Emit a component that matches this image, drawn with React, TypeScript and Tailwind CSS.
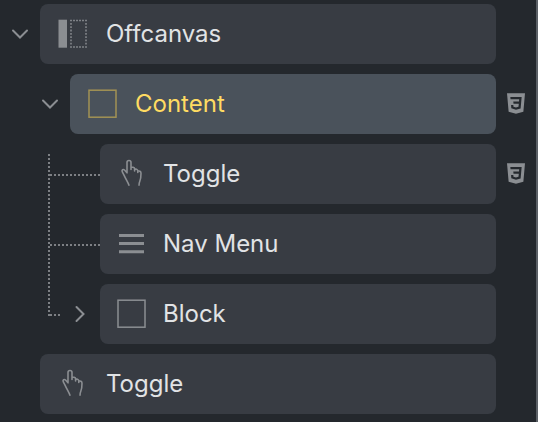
import { useState } from "react";

type IconName = "offcanvas" | "block" | "toggle" | "menu";

interface ElementIconProps {
  name: IconName;
}

const ElementIcon: React.FC<ElementIconProps> = ({ name }) => {
  return (
    <svg
      width="30"
      height="30"
      viewBox="0 0 30 30"
      fill="none"
      stroke="currentColor"
      className="shrink-0"
    >
      {name === "offcanvas" && (
        <>
          <rect x="0.5" y="0.7" width="8.5" height="28" fill="currentColor" stroke="none" />
          <g strokeWidth="1.7" opacity="0.85">
            <path d="M12 1.5H29M12 28H29" strokeDasharray="2 1" />
            <path d="M13 4V27M28 4V27" strokeDasharray="1.8 1.5" />
          </g>
        </>
      )}
      {name === "block" && (
        <rect x="1" y="1.2" width="27" height="27" strokeWidth="1.5" />
      )}
      {name === "toggle" && (
        <path
          d="M12.2 26.7C11 23.5 8.8 20 7.5 17.2L5.2 12.7C4.5 11 6.3 9.8 7.5 11L10 13.8V3.5C10 .9 14 .9 14 3.5V10.5V8.8C14.8 7.8 17.6 8 17.6 10V12V10.5C18.5 9.8 20.7 10.2 20.8 12V13.5V12.2C22.2 11.5 24 12.5 24 14.2C24 18 23.9 19.7 22.8 22.2C22 24 22 25 22 26.7"
          strokeWidth="1.6"
          strokeLinejoin="round"
        />
      )}
      {name === "menu" && (
        <path d="M2 6.5H27M2 14.5H27M2 22.8H27" strokeWidth="3" />
      )}
    </svg>
  );
};

const CssBadge: React.FC = () => (
  <svg
    width="18"
    height="21"
    viewBox="1.5 0 21 24"
    fill="currentColor"
    className="-mt-px"
  >
    <path d="M1.5 0h21l-1.91 21.563L11.977 24l-8.565-2.438L1.5 0zm17.09 4.413L5.41 4.41l.213 2.622 10.125.002-.255 2.716h-6.64l.24 2.573h6.182l-.366 3.523-2.91.804-2.956-.81-.188-2.11h-2.61l.29 3.855L12 19.288l5.373-1.53L18.59 4.414z" />
  </svg>
);

const indents = ["", "pl-[30px]", "pl-[60px]"];
const iconInsets = ["pl-[18px]", "pl-[18px]", "pl-[17px]"];
const labelGaps = ["ml-[18px]", "ml-[17px]", "ml-4"];

interface RowProps {
  label: string;
  icon: IconName;
  level?: number;
  open?: boolean;
  onToggle?: () => void;
  active?: boolean;
  hasCss?: boolean;
}

const Row: React.FC<RowProps> = ({
  label,
  icon,
  level = 0,
  open,
  onToggle,
  active,
  hasCss,
}) => {
  return (
    <div className={`flex h-[60px] items-center text-[#8b8e92] ${indents[level]}`}>
      <div className="flex w-10 shrink-0 justify-center">
        {onToggle && (
          <button onClick={onToggle} aria-label={label}>
            <svg
              width="20"
              height="20"
              viewBox="0 0 20 20"
              fill="none"
              stroke="currentColor"
              strokeWidth="2"
              strokeLinecap="round"
              className={open ? "" : "-rotate-90"}
            >
              <path d="M3 6.5L10 13.5L17 6.5" />
            </svg>
          </button>
        )}
      </div>
      <div
        className={`flex h-full flex-1 items-center rounded-lg ${iconInsets[level]} ${
          active ? "bg-[#4a525b] text-[#a39254]" : "bg-[#383c43]"
        }`}
      >
        <ElementIcon name={icon} />
        <span
          className={`text-2xl ${labelGaps[level]} ${
            active ? "text-[#ffdb62]" : "text-[#e1e3e5]"
          }`}
        >
          {label}
        </span>
      </div>
      <div className="flex w-10 shrink-0 justify-center">
        {hasCss && <CssBadge />}
      </div>
    </div>
  );
};

// dotted guides joining a parent to its children
const Guides: React.FC = () => (
  <svg
    width="52"
    height="162"
    viewBox="0 0 52 162"
    fill="none"
    stroke="#7d8084"
    strokeWidth="2"
    strokeDasharray="2 2"
    className="pointer-events-none absolute left-12 top-2.5"
  >
    <path d="M1 0V162M2 21H52M2 91H52M2 161H12" />
  </svg>
);

const App: React.FC = () => {
  const [offcanvasOpen, setOffcanvasOpen] = useState(true);
  const [contentOpen, setContentOpen] = useState(true);
  const [blockOpen, setBlockOpen] = useState(false);

  return (
    <div className="flex h-[422px] w-[538px] flex-col gap-2.5 overflow-hidden border-r-2 border-[#5b6066] bg-[#24282d] pt-1 font-['Inter',sans-serif]">
      <Row
        label="Offcanvas"
        icon="offcanvas"
        open={offcanvasOpen}
        onToggle={() => setOffcanvasOpen(!offcanvasOpen)}
      />
      {offcanvasOpen && (
        <Row
          label="Content"
          icon="block"
          level={1}
          open={contentOpen}
          onToggle={() => setContentOpen(!contentOpen)}
          active
          hasCss
        />
      )}
      {offcanvasOpen && contentOpen && (
        <div className="relative flex flex-col gap-2.5">
          <Guides />
          <Row label="Toggle" icon="toggle" level={2} hasCss />
          <Row label="Nav Menu" icon="menu" level={2} />
          <Row
            label="Block"
            icon="block"
            level={2}
            open={blockOpen}
            onToggle={() => setBlockOpen(!blockOpen)}
          />
        </div>
      )}
      <Row label="Toggle" icon="toggle" />
    </div>
  );
};

export default App;
